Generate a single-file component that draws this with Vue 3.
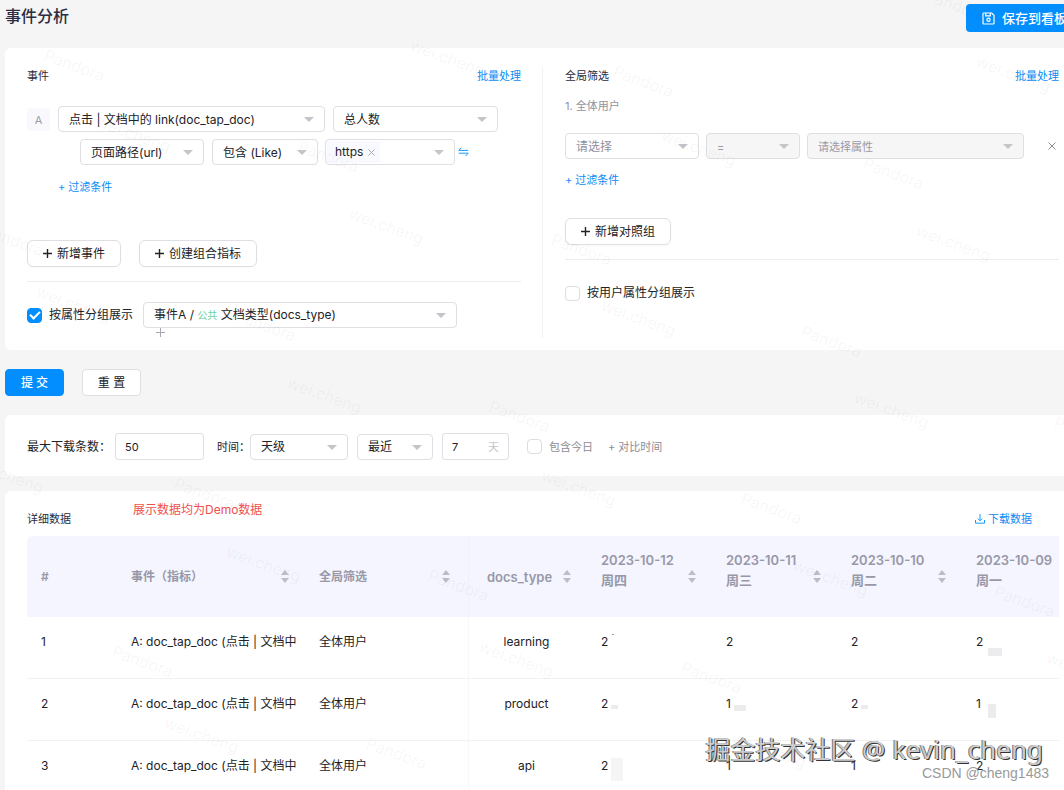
<script setup>
import { ref } from 'vue'

const groupByProperty = ref(true)
const groupByUser = ref(false)
const includeToday = ref(false)
const limit = ref('50')
const days = ref('7')

const dates = [
  { day: '2023-10-12', week: '周四' },
  { day: '2023-10-11', week: '周三' },
  { day: '2023-10-10', week: '周二' },
  { day: '2023-10-09', week: '周一' },
]

const rows = [
  { type: 'learning', values: [{ v: '2', m: 'dot' }, { v: '2' }, { v: '2' }, { v: '2', m: 'low' }] },
  { type: 'product', values: [{ v: '2', m: 'small' }, { v: '1', m: 'mid' }, { v: '2', m: 'small' }, { v: '1', m: 'tall' }] },
  { type: 'api', values: [{ v: '2', m: 'big' }, { v: '1' }, { v: '1' }, { v: '2' }] },
]

const marks = [
  ['Pandora', 43, 60], ['wei.cheng', 409, 50], ['Pandora', 612, 76], ['wei.cheng', 975, 66],
  ['wei.cheng', 95, 126], ['Pandora', 297, 151], ['wei.cheng', 660, 140], ['Pandora', 862, 168],
  ['wei.cheng', 348, 218], ['Pandora', -18, 235], ['wei.cheng', 915, 235], ['Pandora', 550, 244],
  ['wei.cheng', 35, 296], ['Pandora', 234, 320], ['wei.cheng', 600, 310], ['Pandora', 800, 336],
  ['wei.cheng', 286, 387], ['wei.cheng', 853, 402], ['Pandora', 488, 411], ['Pandora', 1053, 427],
  ['wei.cheng', -32, 467], ['Pandora', 173, 488], ['wei.cheng', 540, 480], ['Pandora', 740, 503],
  ['wei.cheng', 225, 556], ['Pandora', 427, 580], ['wei.cheng', 792, 570], ['Pandora', 993, 596],
  ['Pandora', 111, 656], ['wei.cheng', 478, 651], ['Pandora', 680, 672], ['wei.cheng', 1045, 662],
  ['wei.cheng', 163, 727], ['Pandora', 365, 748], ['wei.cheng', 730, 742], ['Pandora', 924, 0],
]
</script>

<template>
  <div class="page">
    <header class="top">
      <h1>事件分析</h1>
      <button class="save" type="button">
        <svg width="13" height="13" viewBox="0 0 13 13" fill="none" stroke="currentColor" stroke-width="1.2">
          <path d="M1.7 1h8L12 3.3V11.3a.7.7 0 0 1-.7.7H1.7a.7.7 0 0 1-.7-.7V1.7A.7.7 0 0 1 1.7 1z" />
          <path d="M3.7 1v2.8h4.6V1" />
          <circle cx="6.5" cy="7.7" r="1.6" />
        </svg>
        <span>保存到看板</span>
      </button>
    </header>

    <section class="card query">
      <div class="pane left">
        <div class="pane-head">
          <h2>事件</h2>
          <a href="#">批量处理</a>
        </div>
        <div class="events">
          <div class="row">
            <span class="letter">A</span>
            <span class="sel event"><select aria-label="事件"><option>点击 | 文档中的 link(doc_tap_doc)</option></select><i></i></span>
            <span class="sel metric"><select aria-label="指标"><option>总人数</option></select><i></i></span>
          </div>
          <div class="row sub">
            <span class="sel prop"><select aria-label="属性"><option>页面路径(url)</option></select><i></i></span>
            <span class="sel op"><select aria-label="条件"><option>包含 (Like)</option></select><i></i></span>
            <div class="sel tags">
              <span class="tag">https<button type="button" aria-label="移除 https">
                <svg width="7" height="7" viewBox="0 0 7 7" stroke="#a9a9b3" fill="none"><path d="M.5.5l6 6M6.5.5l-6 6" /></svg>
              </button></span>
              <input type="text" aria-label="属性值" /><i></i>
            </div>
            <button class="swap" type="button" aria-label="切换">
              <svg width="11" height="10" viewBox="0 0 11 10" stroke="#189bff" stroke-width="1" fill="none"><path d="M3.4.7L.8 3.4h9.4M.8 6.2h9.4L7.6 9" /></svg>
            </button>
          </div>
          <a class="add-filter" href="#">+ 过滤条件</a>
        </div>
        <div class="btns">
          <button class="ghost" type="button"><svg width="9" height="9" viewBox="0 0 9 9" stroke="#222" stroke-width="1.4"><path d="M4.5 0v9M0 4.5h9" /></svg>新增事件</button>
          <button class="ghost" type="button"><svg width="9" height="9" viewBox="0 0 9 9" stroke="#222" stroke-width="1.4"><path d="M4.5 0v9M0 4.5h9" /></svg>创建组合指标</button>
        </div>
        <hr />
        <div class="group">
          <label class="check"><input v-model="groupByProperty" type="checkbox" />按属性分组展示</label>
          <div class="group-sel">
            <button class="sel combo" type="button" aria-haspopup="listbox">
              <span>事件A / <em>公共</em> 文档类型(docs_type)</span><i></i>
            </button>
            <button class="plus" type="button" aria-label="添加分组">
              <svg width="9" height="9" viewBox="0 0 9 9" stroke="#a6a6b4"><path d="M4.5 0v9M0 4.5h9" /></svg>
            </button>
          </div>
        </div>
      </div>

      <div class="pane right">
        <div class="pane-head">
          <h2>全局筛选</h2>
          <a href="#">批量处理</a>
        </div>
        <p class="sub-title">1. 全体用户</p>
        <div class="row filters">
          <span class="sel field muted"><select aria-label="筛选字段"><option>请选择</option></select><i></i></span>
          <span class="sel eq disabled"><select aria-label="运算符" disabled><option>=</option></select><i></i></span>
          <span class="sel val disabled"><select aria-label="筛选属性" disabled><option>请选择属性</option></select><i></i></span>
          <button class="close" type="button" aria-label="删除">
            <svg width="8" height="8" viewBox="0 0 8 8" stroke="#8c8c94" fill="none"><path d="M.5.5l7 7M7.5.5l-7 7" /></svg>
          </button>
        </div>
        <a class="add-filter" href="#">+ 过滤条件</a>
        <div class="btns">
          <button class="ghost" type="button"><svg width="9" height="9" viewBox="0 0 9 9" stroke="#222" stroke-width="1.4"><path d="M4.5 0v9M0 4.5h9" /></svg>新增对照组</button>
        </div>
        <hr />
        <label class="check"><input v-model="groupByUser" type="checkbox" />按用户属性分组展示</label>
      </div>
    </section>

    <div class="actions">
      <button class="primary" type="button">提 交</button>
      <button class="plain" type="button">重 置</button>
    </div>

    <section class="card options">
      <label class="limit" for="limit">最大下载条数：</label>
      <input id="limit" v-model="limit" class="text" type="text" />
      <label class="time" for="gran">时间：</label>
      <span class="sel gran"><select id="gran"><option>天级</option></select><i></i></span>
      <span class="sel range"><select aria-label="范围"><option>最近</option></select><i></i></span>
      <label class="text days"><input v-model="days" type="text" aria-label="天数" /><span>天</span></label>
      <label class="check today"><input v-model="includeToday" type="checkbox" />包含今日</label>
      <button class="compare" type="button">+ 对比时间</button>
    </section>

    <section class="card detail">
      <div class="detail-head">
        <h2>详细数据</h2>
        <strong>展示数据均为Demo数据</strong>
        <a href="#">
          <svg width="10" height="10" viewBox="0 0 10 10" stroke="#189bff" fill="none"><path d="M5 0v6.5M2.8 4.6L5 6.8l2.2-2.2M.5 6v3.2h9V6" /></svg>下载数据
        </a>
      </div>
      <table>
        <colgroup>
          <col class="c-no" /><col class="c-event" /><col class="c-filter" /><col class="c-type" />
          <col class="c-date" /><col class="c-date" /><col class="c-date" /><col />
        </colgroup>
        <thead>
          <tr>
            <th>#</th>
            <th><div class="th">事件（指标）<span class="sort"></span></div></th>
            <th class="filter"><div class="th">全局筛选<span class="sort"></span></div></th>
            <th class="type"><div class="th">docs_type<span class="sort"></span></div></th>
            <th v-for="(d, i) in dates" :key="d.day">
              <div class="th"><span class="date">{{ d.day }}<br />{{ d.week }}</span><span v-if="i < 3" class="sort"></span></div>
            </th>
          </tr>
        </thead>
        <tbody>
          <tr v-for="(r, i) in rows" :key="r.type">
            <td>{{ i + 1 }}</td>
            <td><div class="clip">A: doc_tap_doc (点击 | 文档中的 link)</div></td>
            <td>全体用户</td>
            <td class="type">{{ r.type }}</td>
            <td v-for="(c, j) in r.values" :key="j"><span class="num">{{ c.v }}<b v-if="c.m" :class="c.m"></b></span></td>
          </tr>
        </tbody>
      </table>
    </section>

    <svg class="marks" aria-hidden="true">
      <text v-for="(m, i) in marks" :key="i" :transform="`translate(${m[1]} ${m[2]}) rotate(20)`">{{ m[0] }}</text>
    </svg>
    <div class="credit">
      <p class="site">掘金技术社区 <span>@ kevin_cheng</span></p>
      <p class="csdn">CSDN @cheng1483</p>
    </div>
  </div>
</template>

<style>
html,
body {
  height: 100%;
  overflow: hidden;
}
#app {
  height: 100%;
}
</style>

<style scoped>
* {
  box-sizing: border-box;
}
.page {
  position: relative;
  height: 100%;
  overflow: hidden;
  display: flex;
  flex-direction: column;
  padding-left: 5px;
  background: #f5f5f5;
  color: #222226;
  font: 12px/20px Inter, "Noto Sans CJK SC", sans-serif;
}
button,
input,
select {
  font: inherit;
  color: inherit;
  margin: 0;
}
button {
  cursor: pointer;
  white-space: nowrap;
}
h1,
h2,
p {
  margin: 0;
}
a {
  color: #0c8df5;
  text-decoration: none;
  font-size: 11px;
}
h2 {
  font-size: 11px;
  font-weight: 400;
  color: #2c2c3a;
}
.top {
  flex: none;
  display: flex;
  justify-content: space-between;
  align-items: flex-start;
  height: 48px;
  padding-top: 4px;
}
h1 {
  font-size: 16px;
  line-height: 24px;
  font-weight: 500;
  color: #2c2c44;
}
.save {
  display: flex;
  align-items: center;
  gap: 7px;
  width: 98px;
  height: 28px;
  padding: 0 0 0 16px;
  border: 0;
  border-radius: 4px 0 0 4px;
  background: #038eff;
  color: #fff;
  font-weight: 500;
  overflow: hidden;
  font-size: 13px;
}
.save svg {
  flex: none;
}
.card {
  flex: none;
  background: #fff;
  border-radius: 6px 0 0 6px;
}
.query {
  display: grid;
  grid-template-columns: 538fr 521fr;
  padding: 20px 0 12px;
}
.pane {
  display: flex;
  flex-direction: column;
  align-items: stretch;
}
.left {
  padding: 0 21px 0 22px;
  border-right: 1px solid #f2f2f4;
  height: 270px;
}
.right {
  padding: 0 5px 0 22px;
}
.pane-head {
  display: flex;
  justify-content: space-between;
  line-height: 16px;
}
.row {
  display: flex;
  align-items: center;
  gap: 8px;
}
.events {
  padding-top: 22px;
  height: 156px;
}
.letter {
  width: 23px;
  height: 23px;
  border-radius: 3px;
  background: #f9f9fd;
  color: #9c9ca8;
  font-size: 11px;
  line-height: 24px;
  text-align: center;
}
.sel {
  position: relative;
  display: flex;
  align-items: center;
  height: 26px;
  border: 1px solid #dfdfe3;
  border-radius: 4px;
  background: #fff;
}
.sel select {
  appearance: none;
  width: 100%;
  height: 100%;
  padding: 1px 26px 0 10px;
  border: 0;
  background: none;
  outline: none;
  opacity: 1;
}
.sel i {
  position: absolute;
  right: 10px;
  top: 10px;
  border: 5px solid transparent;
  border-top-color: #c4c4ca;
  border-bottom: 0;
  pointer-events: none;
}
.event {
  width: 267px;
}
.metric {
  width: 165px;
}
.sub {
  padding: 7px 0 0 53px;
}
.prop {
  width: 124px;
}
.op {
  width: 106px;
}
.sub .op {
  margin-right: -1px;
}
.tags {
  width: 130px;
  padding-left: 1px;
}
.tag {
  display: flex;
  align-items: center;
  gap: 5px;
  padding: 0 5px 0 8px;
  background: #f8faff;
  line-height: 22px;
}
.tag button,
.swap,
.close,
.plus,
.compare {
  display: flex;
  padding: 0;
  border: 0;
  background: none;
}
.swap {
  margin-left: -5px;
}
.tags input {
  min-width: 0;
  flex: 1;
  border: 0;
  outline: none;
  background: none;
}
.add-filter {
  display: block;
  line-height: 16px;
}
.events .add-filter {
  margin: 14px 0 0 31px;
}
.btns {
  display: flex;
  gap: 18px;
}
.ghost {
  display: flex;
  align-items: center;
  gap: 5px;
  height: 27px;
  padding: 0 15px;
  border: 1px solid #dfdfe3;
  border-radius: 6px;
  background: #fff;
  box-shadow: 0 1px 2px rgba(0, 0, 0, 0.03);
  font-size: 12px;
}
hr {
  width: 100%;
  margin: 14px 0 0;
  border: 0;
  border-top: 1px solid #ededef;
}
.group {
  display: flex;
  gap: 10px;
  padding-top: 20px;
}
.check {
  display: flex;
  align-items: center;
  gap: 7px;
  height: 26px;
  white-space: nowrap;
}
.check input {
  appearance: none;
  width: 15px;
  height: 15px;
  border: 1px solid #dcdce2;
  border-radius: 4px;
  background: #fff;
  display: grid;
  place-items: center;
}
.check input:checked {
  background: #038eff;
  border-color: #038eff;
}
.check input:checked::after {
  content: "";
  width: 8px;
  height: 4px;
  border: solid #fff;
  border-width: 0 0 2px 2px;
  transform: translateY(-1px) rotate(-45deg);
}
.group-sel {
  flex: 0 1 314px;
}
.combo {
  width: 100%;
  padding: 0 10px;
}
.combo em {
  font-style: normal;
  font-size: 10px;
  color: #6cd2a6;
}
.plus {
  margin: 0 0 0 13px;
}
.sub-title {
  margin-top: 14px;
  font-size: 11px;
  line-height: 16px;
  color: #92929e;
}
.filters {
  margin-top: 19px;
  gap: 7px;
}
.field {
  width: 134px;
}
.muted {
  color: #8f8fa0;
}
.eq {
  width: 94px;
}
.val {
  flex: 0 1 217px;
}
.disabled {
  background: #f6f6f7;
  color: #9a9aa8;
  font-size: 11px;
}
.close {
  margin-left: auto;
  margin-right: 3px;
}
.right .add-filter {
  margin-top: 13px;
}
.right .btns {
  margin-top: 30px;
}
.right .check {
  margin-top: 20px;
}
.actions {
  display: flex;
  gap: 18px;
  padding: 19px 0;
}
.primary,
.plain {
  height: 27px;
  width: 59px;
  padding: 0;
  border: 1px solid #038eff;
  border-radius: 4px;
  background: #038eff;
  color: #fff;
  font-weight: 500;
}
.plain {
  border-color: #e0e0e2;
  background: #fff;
  color: #222226;
  font-weight: 400;
}
.options {
  display: flex;
  align-items: center;
  height: 61px;
  padding: 2px 0 0 22px;
  margin-bottom: 15px;
}
.limit {
  width: 88px;
  white-space: nowrap;
}
.text {
  width: 89px;
  height: 27px;
  padding: 0 9px;
  border: 1px solid #e0e0e4;
  border-radius: 3px;
  background: #fff;
  outline: none;
  font-size: 11px;
}
.time {
  width: 33px;
  margin-left: 13px;
  font-size: 11px;
  white-space: nowrap;
}
.gran {
  width: 98px;
}
.range {
  width: 76px;
  margin: 0 9px;
}
.days {
  display: flex;
  align-items: center;
  width: 67px;
}
.days input {
  min-width: 0;
  flex: 1;
  padding: 0;
  border: 0;
  outline: none;
}
.days span {
  color: #c4c4ca;
}
.today {
  margin-left: 18px;
  font-size: 11px;
  color: #8c8c92;
}
.compare {
  margin-left: 15px;
  font-size: 11px;
  color: #8c8c92;
}
.detail {
  padding: 9px 5px 0 22px;
}
.detail-head {
  display: flex;
  align-items: flex-end;
  height: 36px;
  padding-bottom: 7px;
  line-height: 20px;
}
.detail-head strong {
  align-self: flex-start;
  margin-left: 62px;
  color: #f0504d;
  font-size: 12px;
  font-weight: 400;
}
.detail-head a {
  display: flex;
  align-items: center;
  gap: 3px;
  margin: 0 27px 0 auto;
}
table {
  width: 100%;
  table-layout: fixed;
  border-collapse: separate;
  border-spacing: 0;
}
.c-no {
  width: 90px;
}
.c-event {
  width: 188px;
}
.c-filter {
  width: 163px;
}
.c-type {
  width: 119px;
}
.c-date {
  width: 125px;
}
th {
  height: 81px;
  padding: 0 16px 0 14px;
  background: #f4f5ff;
  color: #9898a8;
  font-weight: 600;
  text-align: left;
  white-space: nowrap;
}
th:last-child {
  padding-right: 0;
}
th.filter {
  padding-right: 18px;
}
thead th:first-child {
  border-top-left-radius: 6px;
}
.th {
  display: flex;
  align-items: center;
  justify-content: space-between;
}
.date {
  padding-bottom: 13px;
  font-size: 13px;
}
.type .th {
  font-size: 13px;
}
.sort {
  display: grid;
  gap: 3px;
}
.sort::before,
.sort::after {
  content: "";
  border: 4px solid transparent;
}
.sort::before {
  border-top: 0;
  border-bottom: 5px solid #bdbdc4;
}
.sort::after {
  border-bottom: 0;
  border-top: 5px solid #bdbdc4;
}
td {
  height: 62px;
  padding: 15px 1px 0 14px;
  border-bottom: 1px solid #f2f2f4;
  vertical-align: top;
  white-space: nowrap;
}
th.type {
  padding-left: 18px;
  border-left: 1px solid #f0f0f8;
}
td.type {
  padding: 15px 3px 0 0;
  border-left: 1px solid #f8f8fa;
  text-align: center;
}
.clip {
  margin-right: 8px;
  overflow: hidden;
}
.num {
  position: relative;
}
.num b {
  position: absolute;
  left: 10px;
  top: 9px;
  width: 7px;
  height: 4px;
  background: #ececee;
}
.num .dot {
  left: 11px;
  top: 0;
  width: 2px;
  height: 1px;
  background: #999;
}
.num .mid {
  left: 8px;
  width: 12px;
  height: 6px;
}
.num .low {
  left: 12px;
  top: 14px;
  width: 14px;
  height: 8px;
}
.num .tall {
  left: 12px;
  top: 8px;
  width: 8px;
  height: 14px;
}
.num .big {
  top: 0;
  width: 12px;
  height: 23px;
  background: #f5f5f6;
}
.marks {
  position: absolute;
  inset: 0;
  width: 100%;
  height: 100%;
  pointer-events: none;
  font-size: 16px;
  fill: rgba(0, 0, 0, 0.045);
}
.credit {
  position: absolute;
  right: 15px;
  bottom: 9px;
  text-align: right;
  pointer-events: none;
}
.site {
  margin-right: 6px;
  font: 25px/32px "Noto Sans", "Noto Sans CJK SC", sans-serif;
  color: #ccc;
  text-shadow: 1px 1px 0 #333, -1px 0 0 #777;
}
.site span {
  font-size: 26px;
}
.csdn {
  font: 14px/16px "Liberation Sans", "Noto Sans CJK SC", sans-serif;
  color: #999;
}
</style>
